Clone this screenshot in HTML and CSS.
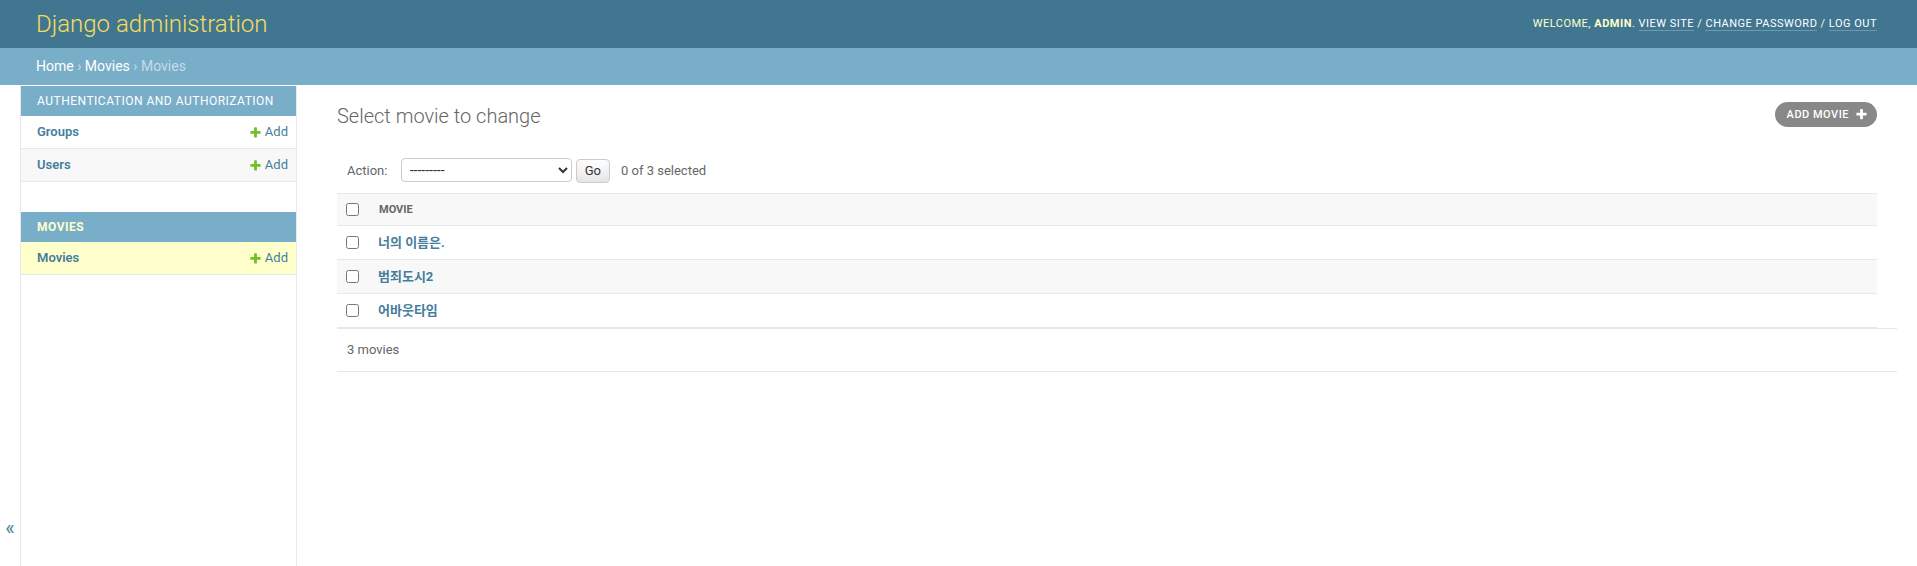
FILE: index.html
```html
<!DOCTYPE html>
<html lang="en">
<head>
<meta charset="utf-8">
<title>Select movie to change | Django site admin</title>
<link rel="stylesheet" href="styles.css">
</head>
<body>
<div class="container">
  <header class="header">
    <h1 class="site-name"><a href="#">Django administration</a></h1>
    <div class="user-tools">
      Welcome, <strong>admin</strong>.
      <a href="#">View site</a> /
      <a href="#">Change password</a> /
      <a href="#">Log out</a>
    </div>
  </header>
  <nav class="breadcrumbs">
    <a href="#">Home</a> › <a href="#">Movies</a> › Movies
  </nav>
  <div class="main">
    <button class="toggle-sidebar" type="button" aria-label="Toggle navigation">«</button>
    <nav class="sidebar">
      <div class="module">
        <div class="caption"><a href="#" class="section">Authentication and Authorization</a></div>
        <div class="model-row">
          <a href="#" class="model-name">Groups</a>
          <a href="#" class="addlink"><svg class="add-icon" width="13" height="13" viewBox="0 0 1792 1792"><path fill="#70bf2b" d="M1600 796v192q0 40-28 68t-68 28h-416v416q0 40-28 68t-68 28h-192q-40 0-68-28t-28-68v-416h-416q-40 0-68-28t-28-68v-192q0-40 28-68t68-28h416v-416q0-40 28-68t68-28h192q40 0 68 28t28 68v416h416q40 0 68 28t28 68z"/></svg>Add</a>
        </div>
        <div class="model-row even">
          <a href="#" class="model-name">Users</a>
          <a href="#" class="addlink"><svg class="add-icon" width="13" height="13" viewBox="0 0 1792 1792"><path fill="#70bf2b" d="M1600 796v192q0 40-28 68t-68 28h-416v416q0 40-28 68t-68 28h-192q-40 0-68-28t-28-68v-416h-416q-40 0-68-28t-28-68v-192q0-40 28-68t68-28h416v-416q0-40 28-68t68-28h192q40 0 68 28t28 68v416h416q40 0 68 28t28 68z"/></svg>Add</a>
        </div>
      </div>
      <div class="module current-app">
        <div class="caption"><a href="#" class="section">Movies</a></div>
        <div class="model-row current-model">
          <a href="#" class="model-name">Movies</a>
          <a href="#" class="addlink"><svg class="add-icon" width="13" height="13" viewBox="0 0 1792 1792"><path fill="#70bf2b" d="M1600 796v192q0 40-28 68t-68 28h-416v416q0 40-28 68t-68 28h-192q-40 0-68-28t-28-68v-416h-416q-40 0-68-28t-28-68v-192q0-40 28-68t68-28h416v-416q0-40 28-68t68-28h192q40 0 68 28t28 68v416h416q40 0 68 28t28 68z"/></svg>Add</a>
        </div>
      </div>
    </nav>
    <div class="content">
      <div class="content-head">
        <h1 class="page-title">Select movie to change</h1>
        <ul class="object-tools">
          <li><a href="#" class="tool-add">Add movie<svg class="tool-icon" width="13" height="13" viewBox="0 0 1792 1792"><path fill="#fff" d="M1600 736v192q0 40-28 68t-68 28h-416v416q0 40-28 68t-68 28h-192q-40 0-68-28t-28-68v-416h-416q-40 0-68-28t-28-68v-192q0-40 28-68t68-28h416v-416q0-40 28-68t68-28h192q40 0 68 28t28 68v416h416q40 0 68 28t28 68z"/></svg></a></li>
        </ul>
      </div>
      <form class="changelist-form">
        <div class="actions">
          <label class="action-label">Action:
            <select class="action-select" name="action">
              <option value="" selected>---------</option>
              <option value="delete_selected">Delete selected movies</option>
            </select>
          </label>
          <button type="button" class="go-button">Go</button>
          <span class="action-counter">0 of 3 selected</span>
        </div>
        <table class="results">
          <thead>
            <tr>
              <th class="check-col"><input type="checkbox" class="row-check"></th>
              <th class="col-head">Movie</th>
            </tr>
          </thead>
          <tbody>
            <tr>
              <td class="check-col"><input type="checkbox" class="row-check"></td>
              <th class="field-title"><a href="#">너의 이름은.</a></th>
            </tr>
            <tr class="even">
              <td class="check-col"><input type="checkbox" class="row-check"></td>
              <th class="field-title"><a href="#">범죄도시2</a></th>
            </tr>
            <tr>
              <td class="check-col"><input type="checkbox" class="row-check"></td>
              <th class="field-title"><a href="#">어바웃타임</a></th>
            </tr>
          </tbody>
        </table>
        <p class="paginator">3 movies</p>
      </form>
    </div>
  </div>
</div>
</body>
</html>
```
FILE: styles.css
```css
html, body {
  margin: 0;
  padding: 0;
  height: 100%;
  overflow: hidden;
}

body {
  font-family: Roboto, "Noto Sans CJK KR", sans-serif;
  font-size: 14px;
  color: #333;
  background: #fff;
}

a {
  text-decoration: none;
  color: #447e9b;
}

.container {
  display: flex;
  flex-direction: column;
  height: 100%;
}

/* Header */
.header {
  display: flex;
  justify-content: space-between;
  align-items: center;
  padding: 10px 40px 10px 36px;
  background: #417690;
  color: #ffc;
}

.site-name {
  margin: 0;
  font-size: 24px;
  line-height: 28px;
  font-weight: 300;
}

.site-name a {
  color: #f5dd5d;
}

.user-tools {
  font-size: 11px;
  letter-spacing: 0.5px;
  text-transform: uppercase;
  line-height: 14px;
  color: #ffc;
}

.user-tools strong {
  font-weight: 700;
}

.user-tools a {
  color: #fff;
  border-bottom: 1px solid rgba(255, 255, 255, 0.25);
}

/* Breadcrumbs */
.breadcrumbs {
  padding: 10px 40px 10px 36px;
  background: #79aec8;
  color: #c4dce8;
  font-size: 14px;
  line-height: 17px;
}

.breadcrumbs a {
  color: #fff;
}

/* Main */
.main {
  display: flex;
  flex: 1 1 auto;
  min-height: 0;
}

.toggle-sidebar {
  flex: 0 0 20px;
  width: 20px;
  display: flex;
  align-items: flex-end;
  justify-content: center;
  padding: 0 0 26px 0;
  margin: 0;
  border: 0;
  border-right: 1px solid #e8e8e8;
  background: #fff;
  color: #447e9b;
  font-size: 20px;
  line-height: 24px;
  font-family: Roboto, sans-serif;
  box-sizing: content-box;
}

.sidebar {
  flex: 0 0 275px;
  border-top: 1px solid transparent;
  border-right: 1px solid #e8e8e8;
}

.module {
  margin-bottom: 30px;
}

.caption {
  background: #79aec8;
  padding: 8px 8px 8px 16px;
  font-size: 12px;
  line-height: 14px;
  letter-spacing: 0.5px;
  text-transform: uppercase;
  white-space: nowrap;
  overflow: hidden;
}

.caption .section {
  color: #fff;
}

.current-app .caption .section {
  color: #ffc;
  font-weight: 700;
}

.model-row {
  display: flex;
  justify-content: space-between;
  align-items: flex-start;
  padding: 8px 8px 8px 16px;
  font-size: 13px;
  line-height: 16px;
  border-bottom: 1px solid #e8e8e8;
  background: #fff;
}

.model-row.even {
  background: #f8f8f8;
}

.model-row.current-model {
  background: #ffc;
}

.model-name {
  font-weight: 600;
}

.addlink {
  display: flex;
  align-items: center;
  gap: 3px;
}

.add-icon {
  display: block;
}

/* Content */
.content {
  flex: 1 1 auto;
  min-width: 0;
  padding: 20px 40px;
}

.content-head {
  display: flex;
  justify-content: space-between;
  align-items: flex-start;
}

.page-title {
  margin: 0 0 20px;
  font-size: 20px;
  line-height: 23px;
  font-weight: 300;
  color: #666;
}

.object-tools {
  list-style: none;
  margin: -3px 0 0;
  padding: 0;
}

.tool-add {
  display: flex;
  align-items: center;
  gap: 6px;
  padding: 3px 9px 3px 12px;
  background: #888;
  color: #fff;
  border-radius: 15px;
  font-size: 11px;
  line-height: 19px;
  font-weight: 500;
  letter-spacing: 0.5px;
  text-transform: uppercase;
}

.tool-icon {
  display: block;
}

/* Actions */
.actions {
  display: flex;
  align-items: center;
  padding: 10px;
  font-size: 13px;
  line-height: 24px;
  color: #666;
}

.action-select {
  width: 171px;
  height: 24px;
  margin: 0 0 0 10px;
  padding: 0 0 0 4px;
  border: 1px solid #ccc;
  border-radius: 4px;
  background: #fff;
  color: #333;
  font-family: Roboto, sans-serif;
  font-size: 14px;
}

.go-button {
  height: 24px;
  margin-left: 4px;
  padding: 4px 8px;
  border: 1px solid #ccc;
  border-radius: 4px;
  background: #fff;
  box-shadow: 0 -15px 20px -10px rgba(0, 0, 0, 0.15) inset;
  color: #333;
  font-family: Roboto, sans-serif;
  font-size: 13px;
  line-height: 1;
}

.action-counter {
  margin-left: 11px;
}

/* Results table */
.results {
  width: 100%;
  border-collapse: collapse;
}

.results thead th {
  background: #f8f8f8;
  border-top: 1px solid #e8e8e8;
  border-bottom: 1px solid #e8e8e8;
  text-align: left;
  vertical-align: middle;
  padding: 8px 9px;
  font-size: 11px;
  line-height: 15px;
}

.results .col-head {
  color: #666;
  font-weight: 700;
  text-transform: uppercase;
}

.results .check-col {
  width: 24px;
  padding: 8px 0 8px 9px;
  text-align: left;
}

.results tbody td,
.results tbody th {
  padding: 8px;
  border-bottom: 1px solid #e8e8e8;
  font-size: 13px;
  line-height: 17px;
  text-align: left;
  vertical-align: middle;
}

.results tbody td.check-col {
  padding: 8px 0 8px 9px;
}

.results tbody tr.even {
  background: #f8f8f8;
}

.field-title a {
  font-weight: 700;
}

.row-check {
  display: block;
  margin: 0;
  width: 13px;
  height: 13px;
}

.paginator {
  margin: 0 -20px 0 0;
  padding: 10px;
  font-size: 13px;
  line-height: 22px;
  color: #666;
  border-top: 1px solid #e8e8e8;
  border-bottom: 1px solid #e8e8e8;
}
```
